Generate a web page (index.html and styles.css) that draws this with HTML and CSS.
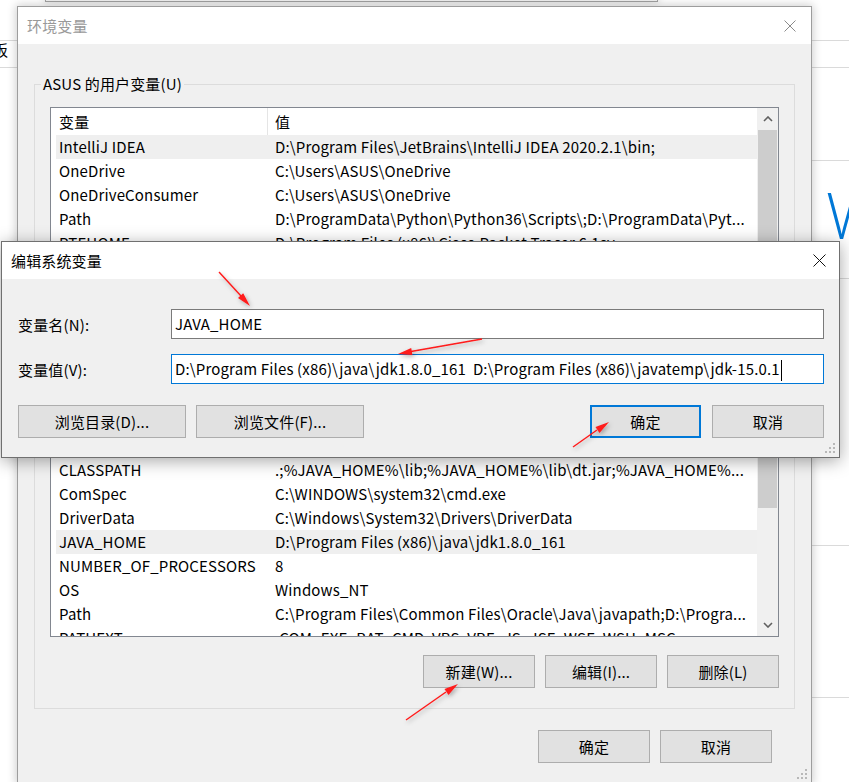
FILE: index.html
```html
<!DOCTYPE html>
<html lang="zh-CN">
<head>
    <meta charset="UTF-8">
    <title>环境变量</title>
    <link rel="stylesheet" href="styles.css">
</head>
<body>
<div class="desk">
    <!-- things behind the dialogs -->
    <div class="bg-window"></div>
    <span class="bg-char">板</span>
    <div class="bg-line" style="left:0;width:17px;top:40px"></div>
    <div class="bg-line" style="left:0;width:17px;top:67px"></div>
    <div class="bg-line" style="left:811px;width:38px;top:40px"></div>
    <div class="bg-line" style="left:811px;width:38px;top:67px"></div>
    <div class="bg-line" style="left:811px;width:38px;top:160px"></div>
    <div class="bg-line" style="left:811px;width:38px;top:278px"></div>
    <div class="bg-line" style="left:811px;width:38px;top:545px"></div>
    <div class="bg-line" style="left:811px;width:38px;top:697px"></div>
    <span class="bg-word">Windows</span>

    <!-- 环境变量 -->
    <div class="dialog env">
        <div class="titlebar">
            <span class="title">环境变量</span>
            <svg class="close" width="12" height="12" viewBox="0 0 12 12"><path d="M0.5 0.5L11.5 11.5M11.5 0.5L0.5 11.5"/></svg>
        </div>
        <div class="dlg-body">
            <fieldset class="group">
                <legend>ASUS 的用户变量(U)</legend>
                <div class="list user-list">
                    <div class="list-main">
                        <div class="list-head"><span>变量</span><span>值</span></div>
                        <div class="row sel"><span>IntelliJ IDEA</span><span>D:\Program Files\JetBrains\IntelliJ IDEA 2020.2.1\bin;</span></div>
                        <div class="row"><span>OneDrive</span><span>C:\Users\ASUS\OneDrive</span></div>
                        <div class="row"><span>OneDriveConsumer</span><span>C:\Users\ASUS\OneDrive</span></div>
                        <div class="row"><span>Path</span><span>D:\ProgramData\Python\Python36\Scripts\;D:\ProgramData\Pyt...</span></div>
                        <div class="row"><span>PTEHOME</span><span>D:\Program Files (x86)\Cisco Packet Tracer 6.1sv</span></div>
                    </div>
                    <div class="scrollbar">
                        <div class="sb-btn"><svg width="10" height="6" viewBox="0 0 10 6"><path d="M1 5L5 1L9 5"/></svg></div>
                        <div class="sb-thumb" style="height:150px"></div>
                        <div class="sb-track"></div>
                    </div>
                </div>
                <div class="btn-row">
                    <button class="btn">新建(N)...</button>
                    <button class="btn">编辑(E)...</button>
                    <button class="btn">删除(D)</button>
                </div>
            </fieldset>

            <fieldset class="group sys">
                <legend>系统变量(S)</legend>
                <div class="list">
                    <div class="list-main">
                        <div class="list-head"><span>变量</span><span>值</span></div>
                        <div class="row"><span>CLASSPATH</span><span>.;%JAVA_HOME%\lib;%JAVA_HOME%\lib\dt.jar;%JAVA_HOME%...</span></div>
                        <div class="row"><span>ComSpec</span><span>C:\WINDOWS\system32\cmd.exe</span></div>
                        <div class="row"><span>DriverData</span><span>C:\Windows\System32\Drivers\DriverData</span></div>
                        <div class="row sel"><span>JAVA_HOME</span><span>D:\Program Files (x86)\java\jdk1.8.0_161</span></div>
                        <div class="row"><span>NUMBER_OF_PROCESSORS</span><span>8</span></div>
                        <div class="row"><span>OS</span><span>Windows_NT</span></div>
                        <div class="row"><span>Path</span><span>C:\Program Files\Common Files\Oracle\Java\javapath;D:\Progra...</span></div>
                        <div class="row"><span>PATHEXT</span><span>.COM;.EXE;.BAT;.CMD;.VBS;.VBE;.JS;.JSE;.WSF;.WSH;.MSC</span></div>
                    </div>
                    <div class="scrollbar">
                        <div class="sb-btn"><svg width="10" height="6" viewBox="0 0 10 6"><path d="M1 5L5 1L9 5"/></svg></div>
                        <div class="sb-thumb" style="height:55px"></div>
                        <div class="sb-track"></div>
                        <div class="sb-btn"><svg width="10" height="6" viewBox="0 0 10 6"><path d="M1 1L5 5L9 1"/></svg></div>
                    </div>
                </div>
                <div class="btn-row">
                    <button class="btn">新建(W)...</button>
                    <button class="btn">编辑(I)...</button>
                    <button class="btn">删除(L)</button>
                </div>
            </fieldset>

            <div class="btn-row dlg-foot">
                <button class="btn">确定</button>
                <button class="btn">取消</button>
            </div>
        </div>
        <svg class="grip" width="11" height="11" viewBox="0 0 11 11">
            <rect x="8" y="0" width="2" height="2"/>
            <rect x="4" y="4" width="2" height="2"/><rect x="8" y="4" width="2" height="2"/>
            <rect x="0" y="8" width="2" height="2"/><rect x="4" y="8" width="2" height="2"/><rect x="8" y="8" width="2" height="2"/>
        </svg>
    </div>

    <!-- 编辑系统变量 -->
    <div class="dialog edit">
        <div class="titlebar">
            <span class="title">编辑系统变量</span>
            <svg class="close" width="13" height="13" viewBox="0 0 13 13"><path d="M0.5 0.5L12.5 12.5M12.5 0.5L0.5 12.5"/></svg>
        </div>
        <div class="edit-body">
            <div class="field">
                <label>变量名(N):</label>
                <div class="textbox">JAVA_HOME</div>
            </div>
            <div class="field">
                <label>变量值(V):</label>
                <div class="textbox focus">D:\Program Files (x86)\java\jdk1.8.0_161&nbsp; D:\Program Files (x86)\javatemp\jdk-15.0.1<span class="caret"></span></div>
            </div>
            <div class="edit-buttons">
                <button class="btn wide">浏览目录(D)...</button>
                <button class="btn wide">浏览文件(F)...</button>
                <span class="spacer"></span>
                <button class="btn primary">确定</button>
                <button class="btn">取消</button>
            </div>
        </div>
        <svg class="grip" width="11" height="11" viewBox="0 0 11 11">
            <rect x="8" y="0" width="2" height="2"/>
            <rect x="4" y="4" width="2" height="2"/><rect x="8" y="4" width="2" height="2"/>
            <rect x="0" y="8" width="2" height="2"/><rect x="4" y="8" width="2" height="2"/><rect x="8" y="8" width="2" height="2"/>
        </svg>
    </div>

    <!-- red annotation arrows -->
    <svg class="arrows" width="849" height="782" viewBox="0 0 849 782">
        <defs>
            <filter id="shade" x="-50%" y="-50%" width="200%" height="200%">
                <feDropShadow dx="1.5" dy="2" stdDeviation="2" flood-color="#000" flood-opacity="0.3"/>
            </filter>
        </defs>
        <g filter="url(#shade)">
            <line x1="219" y1="272" x2="241" y2="296"/>
            <polygon points="250,306 238,298.1 243.2,293.3"/>
            <line x1="482" y1="339" x2="411" y2="351.5"/>
            <polygon points="398,354 411.2,348.1 412.4,355"/>
            <line x1="573" y1="447" x2="597" y2="430"/>
            <polygon points="609,422 599.5,432.9 595.5,427.1"/>
            <line x1="406" y1="720" x2="446" y2="692"/>
            <polygon points="458,684 448.5,694.9 444.5,689.1"/>
        </g>
    </svg>
</div>
</body>
</html>
```
FILE: styles.css
```css
/* page and background */
* {
    box-sizing: border-box;
}
body {
    margin: 0;
    background: #fff;
    font-family: "Noto Sans CJK SC", sans-serif;
    font-size: 15px;
    letter-spacing: 0.15px;
    color: #000;
}
.desk {
    position: relative;
    width: 849px;
    height: 782px;
    overflow: hidden;
}
.bg-window {
    position: absolute;
    left: 45px;
    top: -20px;
    width: 613px;
    height: 22px;
    background: #f0f0f0;
    border: 1px solid #a0a0a0;
    box-shadow: 0 0 8px rgba(0, 0, 0, 0.18);
}
.bg-line {
    position: absolute;
    height: 1px;
    background: #dadada;
}
.bg-char {
    position: absolute;
    left: -7px;
    top: 39px;
    line-height: 22px;
}
.bg-word {
    position: absolute;
    left: 826px;
    top: 175px;
    font-family: "Open Sans", sans-serif;
    font-weight: 300;
    font-size: 64px;
    line-height: 80px;
    letter-spacing: 0;
    color: #0078d7;
}

/* dialogs */
.dialog {
    position: absolute;
    background: #f0f0f0;
}
.env {
    left: 17px;
    top: 6px;
    width: 795px;
    height: 778px;
    border: 1px solid #9d9d9d;
    box-shadow: 0 0 9px 1px rgba(0, 0, 0, 0.2);
}
.edit {
    left: 1px;
    top: 241px;
    width: 839px;
    height: 217px;
    border: 1px solid #707070;
    box-shadow: 0 3px 16px rgba(0, 0, 0, 0.35);
}
.titlebar {
    height: 37px;
    background: #fff;
    display: flex;
    align-items: center;
    justify-content: space-between;
    padding: 0 15px 0 9px;
}
.env .title {
    color: #999;
}
.close path {
    stroke: #8a8a8a;
    stroke-width: 1;
    fill: none;
}
.edit .titlebar {
    padding-right: 13px;
}
.edit .close path {
    stroke: #111;
}
.grip {
    position: absolute;
    right: 3px;
    bottom: 3px;
    fill: #b8b8b8;
}

/* environment dialog body */
.dlg-body {
    padding: 30px 16px 0;
}
.group {
    margin: 0;
    border: 1px solid #dcdcdc;
    padding: 13px 15px 20px;
    min-width: 0;
}
.group legend {
    padding: 0 2px;
    margin-left: -9px;
    line-height: 20px;
}
.group.sys {
    margin-top: 11px;
}
.list {
    height: 207px;
    border: 1px solid #828790;
    background: #fff;
    display: flex;
    overflow: hidden;
}
.list-main {
    flex: 1;
    min-width: 0;
    padding-left: 5px;
}
.list-head,
.row {
    display: grid;
    grid-template-columns: 212px 1fr;
    white-space: nowrap;
}
.list-head {
    height: 27px;
    line-height: 27px;
}
.list-head span:first-child {
    border-right: 1px solid #e5e5e5;
}
.row {
    height: 24px;
    line-height: 24px;
}
.list-head span,
.row span {
    overflow: hidden;
    padding-left: 3px;
}
.list-head span + span,
.row span + span {
    padding-left: 7px;
}
.row.sel {
    background: #efefef;
}
.scrollbar {
    width: 21px;
    background: #f0f0f0;
    display: flex;
    flex-direction: column;
}
.sb-btn {
    height: 22px;
    display: flex;
    align-items: center;
    justify-content: center;
}
.sb-btn path {
    stroke: #606060;
    stroke-width: 1.6;
    fill: none;
}
.sb-thumb {
    background: #cdcdcd;
    margin: 0 1px;
}
.sb-track {
    flex: 1;
}
.btn-row {
    display: flex;
    justify-content: flex-end;
    gap: 10px;
    margin-top: 18px;
}
.btn {
    width: 112px;
    height: 33px;
    background: #e1e1e1;
    border: 1px solid #adadad;
    font-family: inherit;
    font-size: 15px;
    letter-spacing: 0.15px;
    color: #000;
    padding: 0;
}
.dlg-foot {
    margin-top: 21px;
    padding-right: 23px;
}

/* edit dialog body */
.edit-body {
    padding: 30px 15px 0 16px;
}
.field {
    display: flex;
    align-items: center;
    height: 30px;
    margin-bottom: 15px;
}
.field label {
    width: 153px;
}
.textbox {
    flex: 1;
    height: 30px;
    line-height: 28px;
    background: #fff;
    border: 1px solid #7a7a7a;
    padding: 0 3px;
    white-space: nowrap;
    overflow: hidden;
}
.textbox.focus {
    border-color: #0078d7;
}
.caret {
    display: inline-block;
    width: 1px;
    height: 21px;
    background: #000;
    vertical-align: middle;
    margin-left: 1px;
}
.edit-buttons {
    display: flex;
    gap: 10px;
    margin-top: 21px;
}
.btn.wide {
    width: 168px;
}
.spacer {
    flex: 1;
}
.btn.primary {
    width: 111px;
    margin-right: 1px;
    border: 2px solid #0078d7;
}

/* annotations */
.arrows {
    position: absolute;
    left: 0;
    top: 0;
}
.arrows line {
    stroke: #ff1a1a;
    stroke-width: 1.4;
}
.arrows polygon {
    fill: #ff1a1a;
}
```
